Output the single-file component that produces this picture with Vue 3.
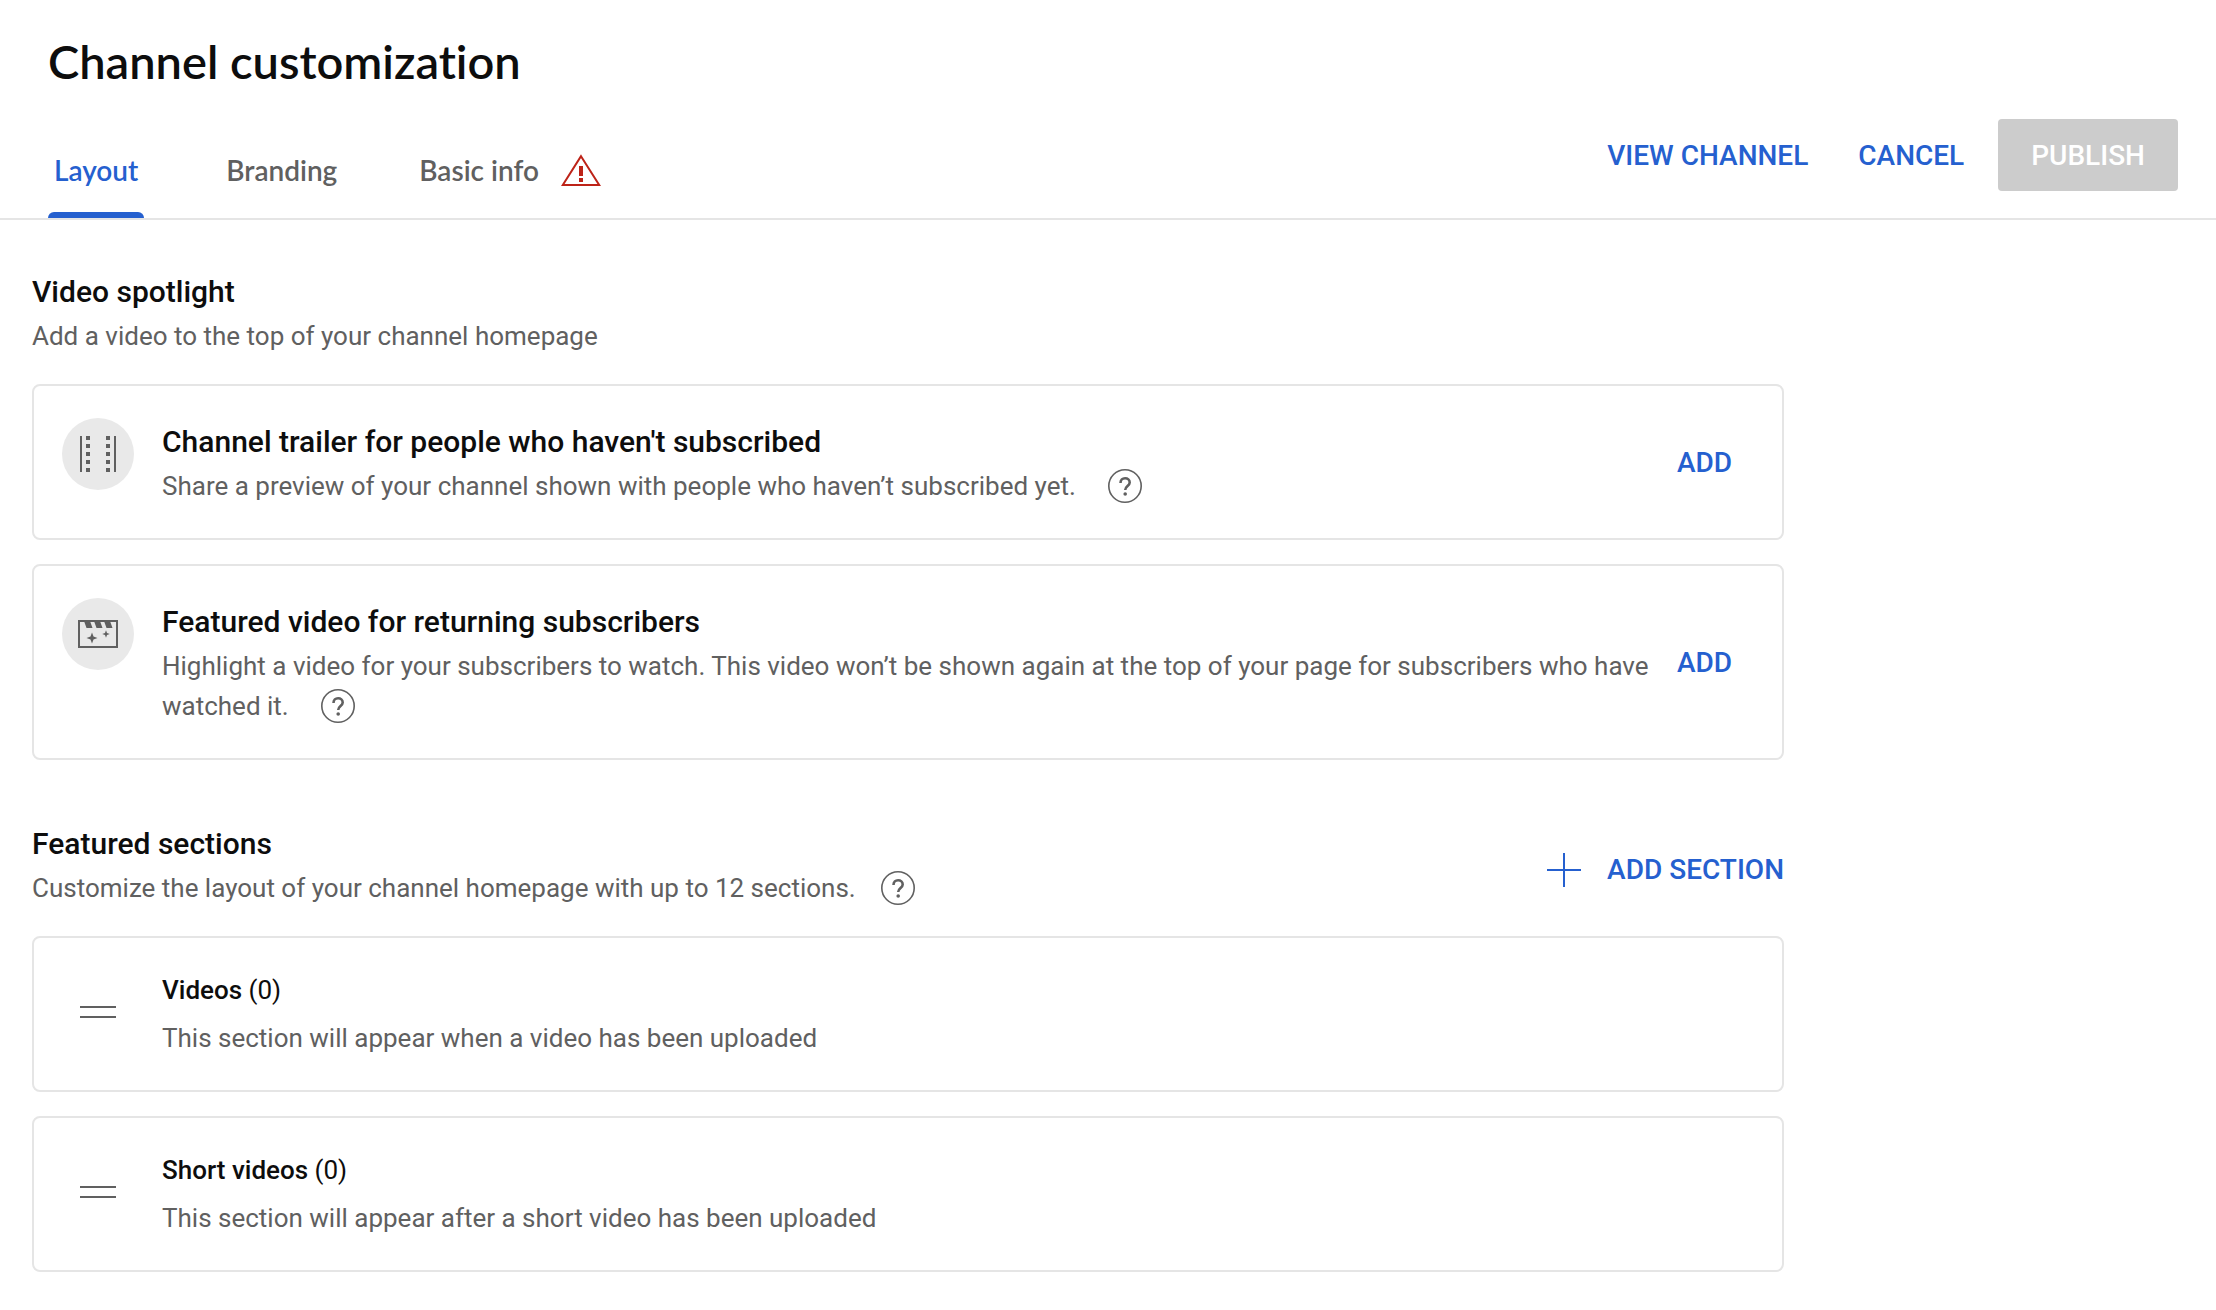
<script setup>
import { ref } from 'vue'

const tabs = [
  { id: 'layout', label: 'Layout' },
  { id: 'branding', label: 'Branding' },
  { id: 'basic', label: 'Basic info', warning: true },
]
const activeTab = ref('layout')

const spotlights = [
  {
    icon: 'film',
    title: "Channel trailer for people who haven't subscribed",
    text: 'Share a preview of your channel shown with people who haven’t subscribed yet.',
  },
  {
    icon: 'clapper',
    title: 'Featured video for returning subscribers',
    text: 'Highlight a video for your subscribers to watch. This video won’t be shown again at the top of your page for subscribers who have watched it.',
  },
]

const sections = [
  { name: 'Videos', count: 0, text: 'This section will appear when a video has been uploaded' },
  { name: 'Short videos', count: 0, text: 'This section will appear after a short video has been uploaded' },
]
</script>

<template>
  <div class="page">
    <header class="header">
      <h1>Channel customization</h1>
      <div class="bar">
        <nav class="tabs" role="tablist">
          <button
            v-for="tab in tabs"
            :key="tab.id"
            type="button"
            role="tab"
            class="tab"
            :class="{ active: tab.id === activeTab }"
            :aria-selected="tab.id === activeTab"
            @click="activeTab = tab.id"
          >
            {{ tab.label }}
            <svg v-if="tab.warning" class="warning" viewBox="0 0 40 32" aria-hidden="true">
              <path d="M20 2.2 38.2 31H1.8Z" fill="none" stroke="currentColor" stroke-width="2" />
              <path d="M18 12h4v10h-4zM18 24h4v4h-4z" fill="currentColor" />
            </svg>
          </button>
        </nav>
        <div class="actions">
          <a href="#" class="action">VIEW CHANNEL</a>
          <button type="button" class="action">CANCEL</button>
          <button type="button" class="publish" disabled>PUBLISH</button>
        </div>
      </div>
    </header>

    <main class="content">
      <section class="group">
        <div class="group-head">
          <div>
            <h2>Video spotlight</h2>
            <p>Add a video to the top of your channel homepage</p>
          </div>
        </div>
        <article v-for="item in spotlights" :key="item.icon" class="card">
          <span class="badge">
            <svg v-if="item.icon === 'film'" viewBox="0 0 72 72" aria-hidden="true">
              <path
                fill="currentColor"
                d="M18 18h2v36h-2zM52 18h2v36h-2zM24 18h4v4h-4zM24 26h4v4h-4zM24 34h4v4h-4zM24 42h4v4h-4zM24 50h4v4h-4zM44 18h4v4h-4zM44 26h4v4h-4zM44 34h4v4h-4zM44 42h4v4h-4zM44 50h4v4h-4z"
              />
            </svg>
            <svg v-else viewBox="0 0 72 72" aria-hidden="true">
              <path d="M17 23h38v26H17z" fill="none" stroke="currentColor" stroke-width="2" />
              <path
                fill="currentColor"
                d="M22 23h6l2.500 7h-6zM32 23h6l2.500 7h-6zM42 23h6l2.500 7h-6zM30 34.500l1.500 4 4 1.500-4 1.500-1.500 4-1.500-4-4-1.500 4-1.500zM44 32.200l1 2.800 2.800 1-2.800 1-1 2.800-1-2.800-2.800-1 2.800-1z"
              />
            </svg>
          </span>
          <div class="card-body">
            <h3>{{ item.title }}</h3>
            <p>
              {{ item.text }}
              <button type="button" class="help inset" aria-label="Help">
                <svg viewBox="0 0 34 34" aria-hidden="true">
                  <circle cx="17" cy="17" r="16.200" fill="none" stroke="currentColor" stroke-width="1.600" />
                  <path d="M12.500 14c0-3 2-4.700 4.600-4.700s4.600 1.700 4.600 4.200c0 3.400-4.500 3.700-4.500 7.500" fill="none" stroke="currentColor" stroke-width="2.600" />
                  <circle cx="17.200" cy="25" r="1.800" fill="currentColor" />
                </svg>
              </button>
            </p>
          </div>
          <button type="button" class="action add">ADD</button>
        </article>
      </section>

      <section class="group">
        <div class="group-head">
          <div>
            <h2>Featured sections</h2>
            <p>
              Customize the layout of your channel homepage with up to 12 sections.
              <button type="button" class="help" aria-label="Help">
                <svg viewBox="0 0 34 34" aria-hidden="true">
                  <circle cx="17" cy="17" r="16.200" fill="none" stroke="currentColor" stroke-width="1.600" />
                  <path d="M12.500 14c0-3 2-4.700 4.600-4.700s4.600 1.700 4.600 4.200c0 3.400-4.500 3.700-4.500 7.500" fill="none" stroke="currentColor" stroke-width="2.600" />
                  <circle cx="17.200" cy="25" r="1.800" fill="currentColor" />
                </svg>
              </button>
            </p>
          </div>
          <button type="button" class="add-section">
            <svg viewBox="0 0 34 34" aria-hidden="true">
              <path d="M17 0v34M0 17h34" stroke="currentColor" stroke-width="2" />
            </svg>
            ADD SECTION
          </button>
        </div>
        <article v-for="section in sections" :key="section.name" class="card">
          <button type="button" class="handle" :aria-label="`Reorder ${section.name}`">
            <svg viewBox="0 0 36 16" aria-hidden="true">
              <path d="M0 1h36M0 11h36" stroke="currentColor" stroke-width="2" />
            </svg>
          </button>
          <div class="card-body">
            <h4>{{ section.name }} <span>({{ section.count }})</span></h4>
            <p>{{ section.text }}</p>
          </div>
        </article>
      </section>
    </main>
  </div>
</template>

<style>
body {
  margin: 0;
  background: #fff;
}
</style>

<style scoped>
.page {
  font-family: Roboto, "Liberation Sans", sans-serif;
  font-size: 26px;
  line-height: 40px;
  color: #606060;
}

h1,
h2,
h3,
h4,
p {
  margin: 0;
}

button {
  padding: 0;
  border: 0;
  background: none;
  color: inherit;
  font: inherit;
  cursor: pointer;
}

svg {
  display: block;
}

.header {
  padding-top: 29px;
  border-bottom: 2px solid #e5e5e5;
}

h1 {
  margin: 0 48px 26px;
  font-family: Lato, sans-serif;
  font-size: 47px;
  font-weight: 600;
  font-variant-ligatures: none;
  line-height: 64px;
  color: #0d0d0d;
}

.bar {
  display: flex;
  align-items: flex-end;
  justify-content: space-between;
  padding: 0 38px 0 48px;
}

.tabs {
  display: flex;
  gap: 82px;
}

.tab {
  display: flex;
  align-items: center;
  gap: 22px;
  height: 96px;
  font-family: Lato, sans-serif;
  font-size: 28px;
  font-weight: 600;
  font-variant-ligatures: none;
}

.tab.active {
  position: relative;
  padding: 0 6px;
  color: #2560cf;
}

.tab.active::after {
  content: "";
  position: absolute;
  right: 0;
  bottom: 0;
  left: 0;
  height: 6px;
  border-radius: 6px 6px 0 0;
  background: #2560cf;
}

.warning {
  width: 40px;
  height: 32px;
  color: #bd2318;
}

.actions {
  display: flex;
  align-items: center;
  gap: 18px;
  margin-bottom: 27px;
}

.action,
.publish,
.add-section {
  font-size: 28px;
  font-weight: 500;
  line-height: 40px;
  color: #2560cf;
  text-decoration: none;
  white-space: nowrap;
}

.action {
  padding: 17px 16px 15px;
}

.publish {
  padding: 17px 33px 15px;
  border-radius: 4px;
  background: #ccc;
  color: #fff;
  cursor: default;
}

.content {
  max-width: 1752px;
  padding: 48px 32px 38px;
}

.group + .group {
  margin-top: 60px;
}

.group-head {
  display: flex;
  align-items: flex-end;
  justify-content: space-between;
  margin-bottom: 28px;
}

h2,
h3 {
  font-size: 30px;
  font-weight: 500;
  line-height: 48px;
  color: #0d0d0d;
}

.card {
  display: flex;
  align-items: center;
  gap: 28px;
  padding: 32px 34px 32px 28px;
  border: 2px solid #e5e5e5;
  border-radius: 8px;
}

.card + .card {
  margin-top: 24px;
}

.badge {
  flex: none;
  align-self: flex-start;
  width: 72px;
  height: 72px;
  border-radius: 50%;
  background: #e9e9e9;
}

.card-body {
  flex: 1;
}

.add {
  margin-left: -28px;
}

.help {
  width: 34px;
  height: 34px;
  margin-left: 19px;
  vertical-align: -8px;
}

.help.inset {
  margin-left: 26px;
}

.add-section {
  display: flex;
  align-items: center;
  gap: 26px;
  height: 76px;
}

.add-section svg {
  width: 34px;
  height: 34px;
}

.handle {
  display: flex;
  flex: none;
  justify-content: center;
  width: 72px;
}

.handle svg {
  width: 36px;
  height: 16px;
}

h4 {
  margin-bottom: 8px;
  font-size: 26px;
  font-weight: 500;
  color: #0d0d0d;
}

h4 span {
  font-weight: 400;
}
</style>
